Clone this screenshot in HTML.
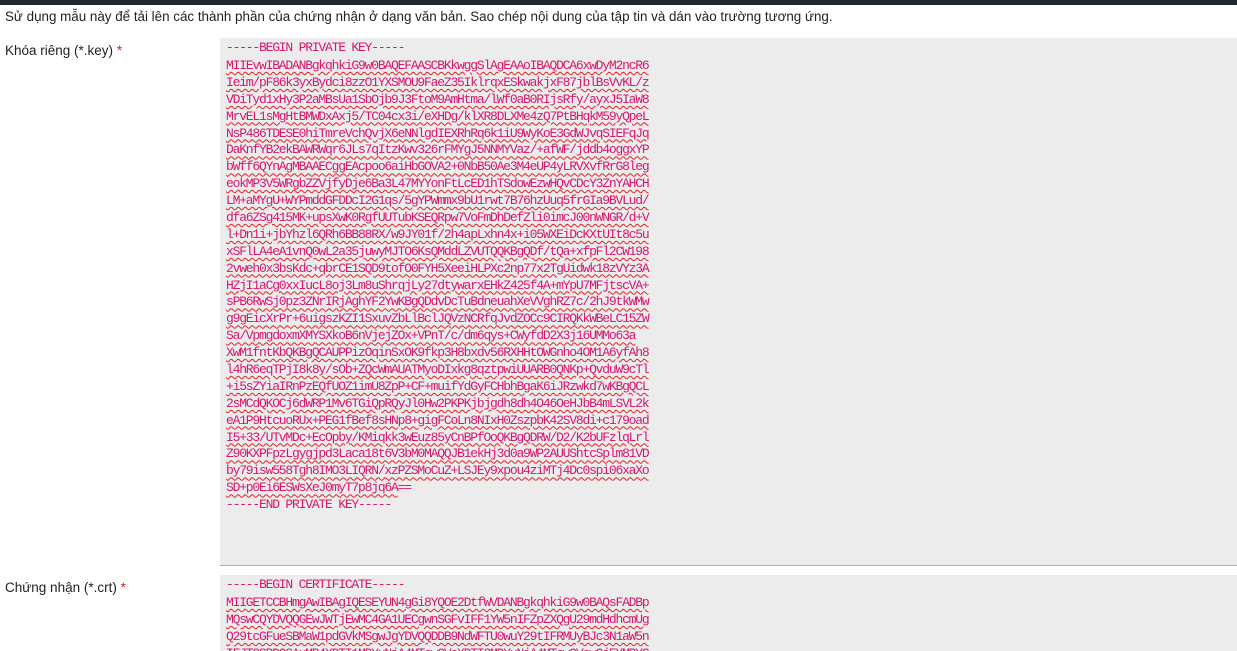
<!DOCTYPE html>
<html><head><meta charset="utf-8"><style>
html,body{margin:0;padding:0;width:1237px;height:651px;overflow:hidden;background:#fff;font-family:"Liberation Sans",sans-serif;}
.top{height:5px;background:#23282d;}
.intro{position:absolute;left:5px;top:9px;font-size:13.4px;color:#222;}
.lbl{position:absolute;left:5px;font-size:13.5px;color:#222;}
.lbl b{color:#c9252c;font-weight:normal;}
.box{position:absolute;left:220px;width:1017px;background:#ececec;font-family:"Liberation Mono",monospace;font-size:13px;letter-spacing:-1.2px;color:#d6176b;line-height:16px;box-sizing:border-box;padding:2px 6px;white-space:pre;overflow:hidden;}
.box div{height:16.9px;}
.box div.f{height:18px;}
.box1{top:38px;height:528px;border-bottom:1px solid #a9b4c2;}
.box2{top:575px;height:76px;}
.w{text-decoration:underline wavy #e02020;text-decoration-thickness:1px;text-underline-offset:2px;}
</style></head><body>
<div class="top"></div>
<div class="intro">Sử dụng mẫu này để tải lên các thành phần của chứng nhận ở dạng văn bản. Sao chép nội dung của tập tin và dán vào trường tương ứng.</div>
<div class="lbl" style="top:43px">Khóa riêng (*.key) <b>*</b></div>
<div class="lbl" style="top:580px">Chứng nhận (*.crt) <b>*</b></div>
<div class="box box1"><div class="f">-----BEGIN PRIVATE KEY-----</div><div><span class="w">MIIEvwIBADANBgkqhkiG9w0BAQEFAASCBKkwggSlAgEAAoIBAQDCA6xwDyM2ncR6</span></div><div><span class="w">Ieim/pF86k3yxBydci8zzO1YXSMOU9FaeZ35IklrqxESkwakjxF87jblBsVvKL/z</span></div><div><span class="w">VDiTyd1xHy3P2aMBsUa1SbOjb9J3FtoM9AmHtma/lWf0aB0RIjsRfy/ayxJ5IaW8</span></div><div><span class="w">MrvEL1sMgHtBMWDxAxj5/TC04cx3i/eXHDg/klXR8DLXMe4zQ7PtBHqkM59yQpeL</span></div><div><span class="w">NsP486TDESE0hiTmreVchQvjX6eNNlgdIEXRhRq6k1iU9WyKoE3GdWJvqSIEFqJq</span></div><div><span class="w">DaKnfYB2ekBAWRWqr6JLs7qItzKwv326rFMYgJ5NNMYVaz/+afWF/jddb4oggxYP</span></div><div><span class="w">bWff6QYnAgMBAAECggEAcpoo6aiHbGOVA2+0NbB50Ae3M4eUP4yLRVXvfRrG8leg</span></div><div><span class="w">eokMP3V5WRgbZZVjfyDje6Ba3L47MYYonFtLcED1hTSdowEzwHQvCDcY3ZnYAHCH</span></div><div><span class="w">LM+aMYgU+WYPmddGFDDcI2G1qs/5gYPWmmx9bU1rwt7B76hzUuq5frGIa9BVLud/</span></div><div><span class="w">dfa6ZSg415MK+upsXwK0RgfUUTubKSEQRpw7VoFmDhDefZli0imcJ00nWNGR/d+V</span></div><div><span class="w">l+Dn1i+jbYhzl6QRh6BB88RX/w9JY01f/2h4apLxhn4x+i05WXEiDcKXtUIt8c5u</span></div><div><span class="w">xSFlLA4eA1vnQ0wL2a35juwyMJTO6KsQMddLZVUTQQKBgQDf/tQa+xfpFl2CW198</span></div><div><span class="w">2vweh0x3bsKdc+qbrCE1SQD9tofO0FYH5XeeiHLPXc2np77x2TgUidwk18zVYz3A</span></div><div><span class="w">HZjI1aCg0xxIucL8oj3Lm8uShrqjLy27dtywarxEHkZ425f4A+mYpU7MFjtscVA+</span></div><div><span class="w">sPB6RwSj0pz3ZNrIRjAghYF2YwKBgQDdvDcTuBdneuahXeVVghRZ7c/2hJ9tkWMw</span></div><div><span class="w">g9gEicXrPr+6uigszKZI1SxuvZbLlBclJQVzNCRfqJvdZOCc9CIRQKkWBeLC15ZW</span></div><div><span class="w">Sa/VpmgdoxmXMYSXkoB6nVjejZOx+VPnT/c/dm6qys+CWyfdD2X3j16UMMo63a</span></div><div><span class="w">XwM1fntKbQKBgQCAUPPizOqinSxOK9fkp3H8bxdv56RXHHtOWGnho4OM1A6yfAh8</span></div><div><span class="w">l4hR6eqTPjI8k8y/sOb+ZQcWmAUATMyoDIxkg8qztpwiUUARB0QNKp+QvduW9cTl</span></div><div><span class="w">+i5sZYiaIRnPzEQfUOZ1imU8ZpP+CF+muifYdGyFCHbhBgaK6iJRzwkd7wKBgQCL</span></div><div><span class="w">2sMCdQKOCj6dWRP1Mv6TGiQpRQyJl0Hw2PKPKjbjgdh8dh4O46OeHJbB4mLSVL2k</span></div><div><span class="w">eA1P9HtcuoRUx+PEG1fBef8sHNp8+gigFCoLn8NIxH0ZszpbK42SV8di+c179oad</span></div><div><span class="w">I5+33/UTvMDc+EcOpby/KMiqkk3wEuz85yCnBPfOoQKBgQDRW/D2/K2bUFzlqLrl</span></div><div><span class="w">Z90KXPFpzLgygjpd3Laca18t6V3bM0MAQQJB1ekHj3d0a9WP2AUUShtcSplm81VD</span></div><div><span class="w">by79isw558Tgh8IMO3LIQRN/xzPZSMoCuZ+LSJEy9xpou4ziMTj4Dc0spi06xaXo</span></div><div><span class="w">SD+p0Ei6ESWsXeJ0myT7p8jq6A</span>==</div><div>-----END PRIVATE KEY-----</div></div>
<div class="box box2"><div class="f">-----BEGIN CERTIFICATE-----</div><div><span class="w">MIIGETCCBHmgAwIBAgIQESEYUN4gGi8YQOE2DtfWVDANBgkqhkiG9w0BAQsFADBp</span></div><div><span class="w">MQswCQYDVQQGEwJWTjEwMC4GA1UECgwnSGFvIFF1YW5nIFZpZXQgU29mdHdhcmUg</span></div><div><span class="w">Q29tcGFueSBMaW1pdGVkMSgwJgYDVQQDDB9NdWFTU0wuY29tIFRMUyBJc3N1aW5n</span></div><div><span class="w">IFJTQSBDQSAxMB4XDTI1MDYxNjA4MTcwOVoXDTI2MDYxNjA4MTcwOVowGjEYMBYG</span></div></div>
</body></html>
